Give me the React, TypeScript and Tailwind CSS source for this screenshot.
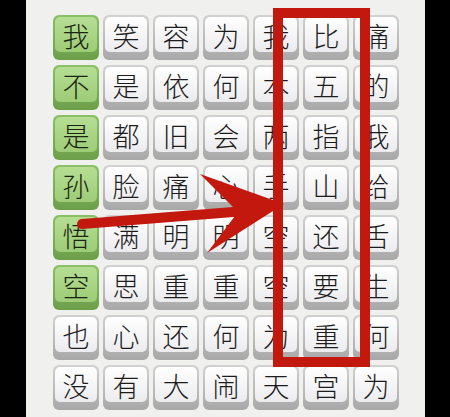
const rows: string[][] = [
  ['我', '笑', '容', '为', '我', '比', '痛'],
  ['不', '是', '依', '何', '本', '五', '的'],
  ['是', '都', '旧', '会', '两', '指', '我'],
  ['孙', '脸', '痛', '心', '手', '山', '给'],
  ['悟', '满', '明', '明', '空', '还', '舌'],
  ['空', '思', '重', '重', '空', '要', '生'],
  ['也', '心', '还', '何', '为', '重', '何'],
  ['没', '有', '大', '闹', '天', '宫', '为'],
];

function Tile({ ch, green }: { ch: string; green: boolean }) {
  return (
    <div
      className={
        green
          ? 'h-[45px] w-[46px] rounded-[6px] bg-linear-to-b from-[#8cc068] to-[#6d9f4a] px-[2px] pt-[2px] pb-[8px]'
          : 'h-[45px] w-[46px] rounded-[6px] bg-linear-to-b from-[#d2d2d2] to-[#a8a8a8] px-[2px] pt-[2px] pb-[8px]'
      }
    >
      <div
        className={
          green
            ? 'flex h-full items-center justify-center rounded-[5px] bg-linear-to-b from-[#b6de94] to-[#9dcc76] pt-[1px] text-[27px] leading-none font-light text-[#1a2412]'
            : 'flex h-full items-center justify-center rounded-[5px] bg-linear-to-b from-white to-[#ececef] pt-[1px] text-[27px] leading-none font-light text-[#1c1c1c]'
        }
        style={{ fontFamily: '"Noto Sans CJK SC", "Noto Sans CJK JP", sans-serif' }}
      >
        {ch}
      </div>
    </div>
  );
}

export default function App() {
  return (
    <div className="flex h-[417px] w-[450px] bg-black">
      <div className="relative ml-[26px] h-[417px] w-[399px] bg-[#f0f0ee] pt-[15px] pl-[27px]">
        <div className="grid w-[346px] grid-cols-7 gap-x-[4px] gap-y-[5px]">
          {rows.map((row, r) =>
            row.map((ch, c) => (
              <Tile key={`${r}-${c}`} ch={ch} green={c === 0 && r < 6} />
            ))
          )}
        </div>

        {/* arrow + highlight box */}
        <svg
          className="pointer-events-none absolute top-0 left-[-26px]"
          width="450"
          height="417"
          viewBox="0 0 450 417"
        >
          <line x1="82" y1="224" x2="246" y2="211" stroke="#c2180e" strokeWidth="10" strokeLinecap="round" />
          <polygon points="200,174 284,204 207,253 238,212" fill="#c2180e" />
          <rect x="278" y="13" width="87" height="349" fill="none" stroke="#c2180e" strokeWidth="10" />
        </svg>
      </div>
    </div>
  );
}
